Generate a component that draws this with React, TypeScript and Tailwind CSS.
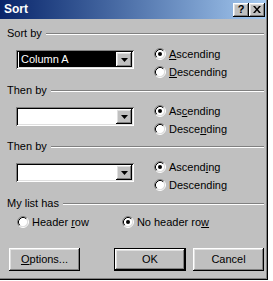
import React from "react";

const raised =
  "shadow-[inset_-1px_-1px_#000,inset_1px_1px_#fff,inset_-2px_-2px_#808080,inset_2px_2px_#dfdfdf]";
const sunken =
  "shadow-[inset_1px_1px_#808080,inset_-1px_-1px_#fff,inset_2px_2px_#000,inset_-2px_-2px_#dfdfdf]";

function Radio({ checked }: { checked?: boolean }) {
  return (
    <svg width="12" height="12" viewBox="0 0 12 12" className="shrink-0">
      <circle cx="6" cy="6" r="4.5" fill="#fff" />
      <path d="M2.11 9.89A5.5 5.5 0 0 1 9.89 2.11" fill="none" stroke="#808080" />
      <path d="M9.89 2.11A5.5 5.5 0 0 1 2.11 9.89" fill="none" stroke="#fff" />
      <path d="M2.82 9.18A4.5 4.5 0 0 1 9.18 2.82" fill="none" stroke="#000" />
      <path d="M9.18 2.82A4.5 4.5 0 0 1 2.82 9.18" fill="none" stroke="#dfdfdf" />
      {checked && <circle cx="6" cy="6" r="2" fill="#000" />}
    </svg>
  );
}

function Option({
  checked,
  pre,
  key_,
  post,
}: {
  checked?: boolean;
  pre: string;
  key_: string;
  post: string;
}) {
  return (
    <div className="flex items-center gap-[3px] h-[18px]">
      <Radio checked={checked} />
      <span>
        {pre}
        <u>{key_}</u>
        {post}
      </span>
    </div>
  );
}

function GroupLabel({ label }: { label: string }) {
  return (
    <div className="flex items-center gap-[4px] h-[13px]">
      <span>{label}</span>
      <div className="flex-1 h-[2px] border-t border-t-[#808080] border-b border-b-white" />
    </div>
  );
}

function Combo({ value }: { value?: string }) {
  return (
    <div className={`relative w-[118px] h-[19px] bg-white p-[2px] flex ${sunken}`}>
      <div className="flex-1 flex items-center pl-[1px]">
        {value && (
          <div className="w-full h-full bg-black text-white flex items-center pl-[2px]">{value}</div>
        )}
      </div>
      <div className={`w-[16px] h-full bg-[#c0c0c0] flex items-center justify-center ${raised}`}>
        <svg width="7" height="4" viewBox="0 0 7 4">
          <path d="M0 0h7L3.5 4z" fill="#000" />
        </svg>
      </div>
    </div>
  );
}

function SortGroup({
  label,
  value,
  asc,
  desc,
}: {
  label: string;
  value?: string;
  asc: [string, string, string];
  desc: [string, string, string];
}) {
  return (
    <div className="flex flex-col">
      <GroupLabel label={label} />
      <div className="flex mt-[5px] h-[36px]">
        <div className="ml-[9px] mt-[5px]">
          <Combo value={value} />
        </div>
        <div className="ml-[20px] flex flex-col">
          <Option checked pre={asc[0]} key_={asc[1]} post={asc[2]} />
          <Option pre={desc[0]} key_={desc[1]} post={desc[2]} />
        </div>
      </div>
    </div>
  );
}

function Button({ children, isDefault }: { children: React.ReactNode; isDefault?: boolean }) {
  if (isDefault) {
    return (
      <div className="w-[72px] h-[23px] border border-black">
        <div className={`w-full h-full bg-[#c0c0c0] flex items-center justify-center ${raised}`}>
          {children}
        </div>
      </div>
    );
  }
  return (
    <div className={`w-[71px] h-[23px] bg-[#c0c0c0] flex items-center justify-center ${raised}`}>
      {children}
    </div>
  );
}

export default function App() {
  return (
    <div className="w-[273px] h-[281px] bg-white font-['Liberation_Sans',Arial,sans-serif] text-[11px] leading-[13px] text-black">
      <div className="w-[268px] h-[280px] bg-[#c0c0c0] flex flex-col shadow-[inset_-1px_-1px_#000,inset_-2px_-2px_#808080]">
        <div className="h-[19px] mr-[2px] bg-linear-to-r from-[#0a246a] to-[#a6caf0] flex items-center pl-[4px] pr-[1px]">
          <span className="text-white font-bold text-[12px] flex-1">Sort</span>
          <div className="flex">
            <div className={`w-[16px] h-[14px] bg-[#c0c0c0] flex items-center justify-center font-bold text-[11px] ${raised}`}>
              ?
            </div>
            <div className={`w-[16px] h-[14px] bg-[#c0c0c0] flex items-center justify-center ${raised}`}>
              <svg width="8" height="7" viewBox="0 0 8 7">
                <path d="M0 0h2l2 2.5L6 0h2L5 3.5 8 7H6L4 4.5 2 7H0l3-3.5z" fill="#000" />
              </svg>
            </div>
          </div>
        </div>

        <div className="flex flex-col pl-[7px] pr-[4px] pt-[8px]">
          <SortGroup
            label="Sort by"
            value="Column A"
            asc={["", "A", "scending"]}
            desc={["", "D", "escending"]}
          />
          <div className="mt-[3px]">
            <SortGroup
              label="Then by"
              asc={["As", "c", "ending"]}
              desc={["Desce", "n", "ding"]}
            />
          </div>
          <div className="mt-[2px]">
            <SortGroup
              label="Then by"
              asc={["Ascend", "i", "ng"]}
              desc={["Descendin", "g", ""]}
            />
          </div>
          <div className="mt-[3px]">
            <GroupLabel label="My list has" />
          </div>
          <div className="flex mt-[3px] ml-[10px]">
            <Option pre="Header " key_="r" post="ow" />
            <div className="ml-[33px]">
              <Option checked pre="No header ro" key_="w" post="" />
            </div>
          </div>

          <div className="flex items-center mt-[17px] pl-[2px]">
            <Button>
              <span>
                <u>O</u>ptions...
              </span>
            </Button>
            <div className="flex-1" />
            <Button isDefault>OK</Button>
            <div className="ml-[7px]">
              <Button>Cancel</Button>
            </div>
          </div>
        </div>
      </div>
    </div>
  );
}
